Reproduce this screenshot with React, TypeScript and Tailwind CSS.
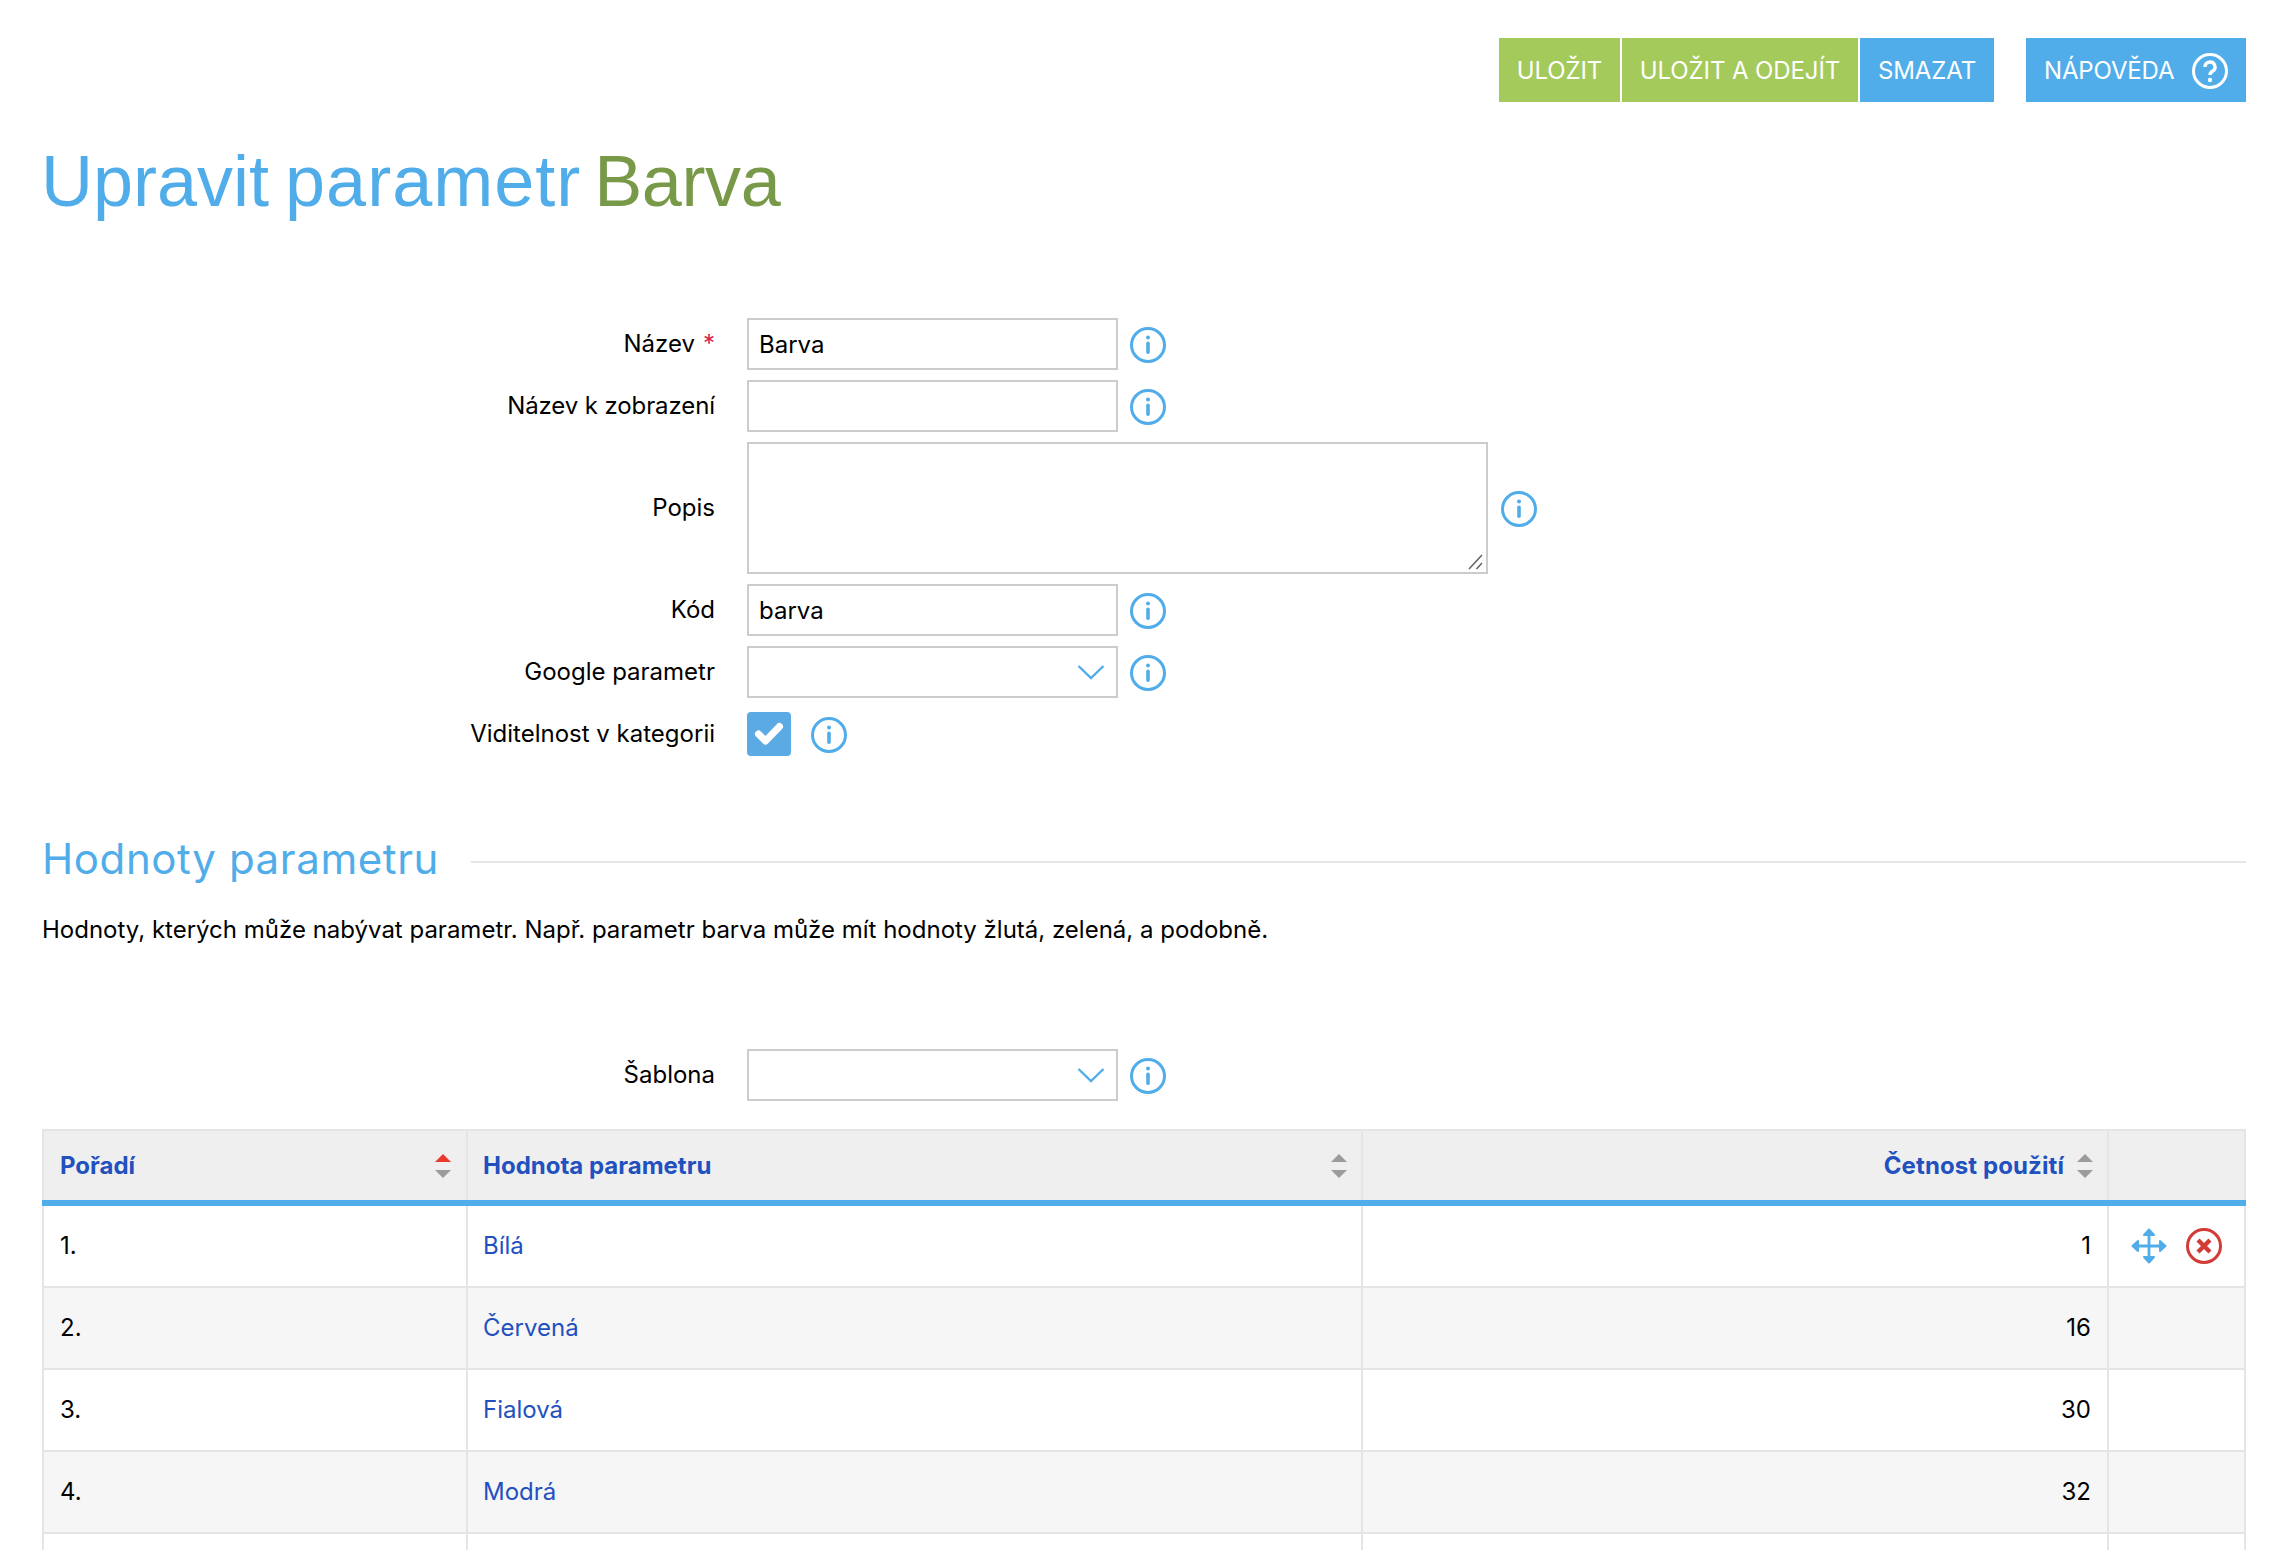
import React from "react";

const Info = () => (
  <svg width="36" height="36" viewBox="0 0 36 36" className="shrink-0 mt-[2px]" fill="none">
    <circle cx="18" cy="18" r="16.5" stroke="#50ade9" strokeWidth="3" />
    <circle cx="18" cy="10.5" r="2" fill="#50ade9" />
    <rect x="16.2" y="14.5" width="3.6" height="12.5" rx="1.8" fill="#50ade9" />
  </svg>
);

const Chevron = () => (
  <svg width="28" height="16" viewBox="0 0 28 16" fill="none" className="absolute right-[11px] top-[16px]">
    <path d="M1.5 2 L14 14 L26.5 2" stroke="#50ade9" strokeWidth="2.4" />
  </svg>
);

const Sort = ({ active }: { active?: boolean }) => (
  <svg width="16" height="24" viewBox="0 0 16 24" className="shrink-0">
    <path d="M8 0 L16 8 L0 8 Z" fill={active ? "#e8392b" : "#9b9b9b"} />
    <path d="M8 24 L16 16 L0 16 Z" fill="#9b9b9b" />
  </svg>
);

const Row = ({ label, req, children }: { label: React.ReactNode; req?: boolean; children: React.ReactNode }) => (
  <div className="flex items-center gap-[32px]">
    <label className="w-[673px] text-right text-[24px] text-black shrink-0">
      {label}
      {req && <span className="text-[#d6234a] ml-[8px]">*</span>}
    </label>
    <div className="flex items-center gap-[12px]">{children}</div>
  </div>
);

const inputCls =
  "w-[371px] h-[52px] border-2 border-[#cccccc] bg-white px-[10px] text-[24px] text-black outline-none";

const SelectBox = () => (
  <div className="relative w-[371px] h-[52px] border-2 border-[#cccccc] bg-white">
    <Chevron />
  </div>
);

const rows = [
  ["1.", "Bílá", "1"],
  ["2.", "Červená", "16"],
  ["3.", "Fialová", "30"],
  ["4.", "Modrá", "32"],
  ["", "", ""],
];

const thCls = "border-2 border-[#e5e5e5] border-b-[#50ade9] border-b-[6px] font-bold";
const btnCls = "h-[64px] pt-[2px] tracking-[-0.1px]";

export default function App() {
  return (
    <div
      className="h-[1550px] overflow-hidden bg-white pl-[42px] pr-[44px] pt-[38px]"
      style={{ fontFamily: "Inter, 'Liberation Sans', sans-serif" }}
    >
      <div className="flex justify-end">
        <div className="flex gap-[2px] text-[24px] text-white">
          <button className={`${btnCls} w-[121px] bg-[#a4ca5b]`}>ULOŽIT</button>
          <button className={`${btnCls} w-[236px] bg-[#a4ca5b]`}>ULOŽIT A ODEJÍT</button>
          <button className={`${btnCls} w-[134px] bg-[#50ade9]`}>SMAZAT</button>
        </div>
        <button className="ml-[32px] h-[64px] w-[220px] pl-[18px] bg-[#50ade9] text-[24px] text-white flex items-center gap-[18px] tracking-[-0.15px]">
          <span className="pt-[2px]">NÁPOVĚDA</span>
          <svg width="36" height="36" viewBox="0 0 36 36" fill="none" className="mt-[2px]">
            <circle cx="18" cy="18" r="16.5" stroke="#fff" strokeWidth="3" />
            <path d="M13 14 a5 5 0 1 1 7.5 4.3 c-1.6 1-2.5 1.6-2.5 3.7" stroke="#fff" strokeWidth="3.4" />
            <circle cx="18" cy="27" r="2.2" fill="#fff" />
          </svg>
        </button>
      </div>

      <h1
        className="mt-[35px] -ml-[1px] text-[72px] leading-[88px] font-normal text-[#50ade9] [word-spacing:-4px]"
        style={{ fontFamily: "'Liberation Sans', sans-serif" }}
      >
        Upravit <span className="tracking-[1px]">parametr</span>{" "}
        <span className="text-[#789a48] tracking-[-0.4px] ml-[-3px]">Barva</span>
      </h1>

      <div className="mt-[93px] flex flex-col gap-[10px]">
        <Row label="Název" req>
          <input className={inputCls} defaultValue="Barva" />
          <Info />
        </Row>
        <Row label={<span className="tracking-[-0.1px]">Název k zobrazení</span>}>
          <input className={inputCls} />
          <Info />
        </Row>
        <Row label="Popis">
          <div className="relative w-[741px] h-[132px]">
            <textarea className="block w-full h-full resize-none border-2 border-[#cccccc] bg-white outline-none" />
            <svg width="18" height="18" viewBox="0 0 18 18" className="absolute right-[4px] bottom-[4px]" fill="none">
              <path d="M16 3 L3 17 M16 11 L10.5 17" stroke="#666666" strokeWidth="1.6" />
            </svg>
          </div>
          <div className="ml-[1px]">
            <Info />
          </div>
        </Row>
        <Row label="Kód">
          <input className={inputCls} defaultValue="barva" />
          <Info />
        </Row>
        <Row label="Google parametr">
          <SelectBox />
          <Info />
        </Row>
        <div className="mt-[4px]">
          <Row label="Viditelnost v kategorii">
            <div className="w-[44px] h-[44px] rounded-[4px] bg-[#5caae3]">
              <svg width="44" height="44" viewBox="0 0 44 44" fill="none">
                <path
                  d="M11.5 22 L18.5 29 L32.5 14.5"
                  stroke="#fff"
                  strokeWidth="7"
                  strokeLinecap="round"
                  strokeLinejoin="round"
                />
              </svg>
            </div>
            <div className="ml-[8px]">
              <Info />
            </div>
          </Row>
        </div>
      </div>

      <div className="mt-[77px] flex items-center gap-[32px]">
        <h2 className="text-[42px] leading-[52px] font-normal text-[#50ade9] tracking-[0.6px]">Hodnoty parametru</h2>
        <div className="flex-1 h-[2px] bg-[#e5e5e5] mt-[5px]" />
      </div>

      <p className="mt-[29px] text-[24px] leading-[32px] text-black">
        Hodnoty, kterých může nabývat parametr. Např. parametr barva může mít hodnoty žlutá, zelená, a podobně.
      </p>

      <div className="mt-[103px]">
        <Row label="Šablona">
          <SelectBox />
          <Info />
        </Row>
      </div>

      <table className="mt-[28px] w-full table-fixed border-collapse text-[24px]">
        <colgroup>
          <col className="w-[424px]" />
          <col className="w-[895px]" />
          <col className="w-[746px]" />
          <col />
        </colgroup>
        <thead>
          <tr className="h-[73px] bg-[#efefef] text-[#2251bf]">
            <th className={`${thCls} pl-[16px] pr-[15px]`}>
              <div className="flex items-center justify-between">
                <span>Pořadí</span>
                <Sort active />
              </div>
            </th>
            <th className={`${thCls} pl-[15px] pr-[14px]`}>
              <div className="flex items-center justify-between">
                <span>Hodnota parametru</span>
                <Sort />
              </div>
            </th>
            <th className={`${thCls} pl-[16px] pr-[14px]`}>
              <div className="flex items-center justify-end gap-[13px]">
                <span className="tracking-[0.1px]">Četnost použití</span>
                <Sort />
              </div>
            </th>
            <th className={thCls} />
          </tr>
        </thead>
        <tbody>
          {rows.map((r, i) => (
            <tr
              key={i}
              className={i === 0 ? "h-[84px] bg-white" : i % 2 ? "h-[82px] bg-[#f6f6f6]" : "h-[82px] bg-white"}
            >
              <td className="border-2 border-[#e5e5e5] px-[16px] text-black">{r[0]}</td>
              <td className="border-2 border-[#e5e5e5] pl-[15px] pr-[16px] text-[#2251bf]">{r[1]}</td>
              <td className="border-2 border-[#e5e5e5] px-[16px] text-right text-black">{r[2]}</td>
              <td className="border-2 border-[#e5e5e5] pl-[22px]">
                {i === 0 && (
                  <div className="flex items-center gap-[19px]">
                    <svg width="36" height="36" viewBox="0 0 36 36" fill="none">
                      <path d="M18 3 V33 M3 18 H33" stroke="#50ade9" strokeWidth="2.8" />
                      <path
                        d="M18 1.5 L23 7 H13 Z M18 34.5 L23 29 H13 Z M1.5 18 L7 13 V23 Z M34.5 18 L29 13 V23 Z"
                        fill="#50ade9"
                        stroke="#50ade9"
                        strokeWidth="2"
                        strokeLinejoin="round"
                      />
                    </svg>
                    <svg width="36" height="36" viewBox="0 0 36 36" fill="none">
                      <circle cx="18" cy="18" r="16.5" stroke="#d33c36" strokeWidth="3" />
                      <path d="M12 12 L24 24 M24 12 L12 24" stroke="#d33c36" strokeWidth="4.4" />
                    </svg>
                  </div>
                )}
              </td>
            </tr>
          ))}
        </tbody>
      </table>
    </div>
  );
}
